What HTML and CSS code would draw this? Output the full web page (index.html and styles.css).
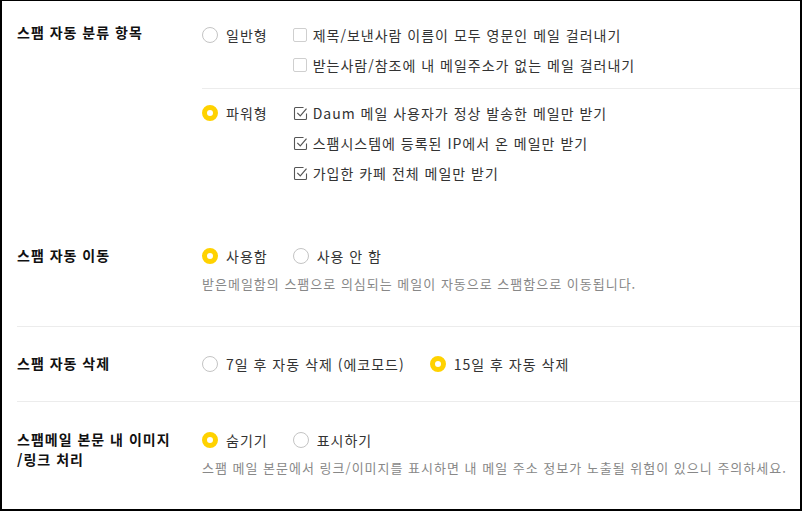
FILE: index.html
```html
<!DOCTYPE html>
<html lang="ko">
<head>
  <meta charset="UTF-8">
  <meta name="viewport" content="width=device-width, initial-scale=1.0">
  <title>스팸 설정</title>
  <link rel="stylesheet" href="styles.css">
</head>
<body>

<div class="frame">

  <div class="section">
    <div class="label label-top">스팸 자동 분류 항목</div>
    <div class="body">
      <div class="group">
        <span class="radio"><i class="dot"></i>일반형</span>
        <div class="checks">
          <div class="check"><i class="box"></i>제목/보낸사람 이름이 모두 영문인 메일 걸러내기</div>
          <div class="check"><i class="box"></i>받는사람/참조에 내 메일주소가 없는 메일 걸러내기</div>
        </div>
      </div>
      <div class="group group-line">
        <span class="radio"><i class="dot on"></i>파워형</span>
        <div class="checks">
          <div class="check">
            <svg class="tick" width="15" height="15" viewBox="0 0 15 15"><path d="M10.5 1.5H2.5a1 1 0 0 0-1 1v10a1 1 0 0 0 1 1h10a1 1 0 0 0 1-1V7.5" fill="none" stroke="#555" stroke-width="1.1"/><path d="M4.3 6.8l3 3.1 6.2-7.2" fill="none" stroke="#555" stroke-width="1.2"/></svg>Daum 메일 사용자가 정상 발송한 메일만 받기
          </div>
          <div class="check">
            <svg class="tick" width="15" height="15" viewBox="0 0 15 15"><path d="M10.5 1.5H2.5a1 1 0 0 0-1 1v10a1 1 0 0 0 1 1h10a1 1 0 0 0 1-1V7.5" fill="none" stroke="#555" stroke-width="1.1"/><path d="M4.3 6.8l3 3.1 6.2-7.2" fill="none" stroke="#555" stroke-width="1.2"/></svg>스팸시스템에 등록된 IP에서 온 메일만 받기
          </div>
          <div class="check">
            <svg class="tick" width="15" height="15" viewBox="0 0 15 15"><path d="M10.5 1.5H2.5a1 1 0 0 0-1 1v10a1 1 0 0 0 1 1h10a1 1 0 0 0 1-1V7.5" fill="none" stroke="#555" stroke-width="1.1"/><path d="M4.3 6.8l3 3.1 6.2-7.2" fill="none" stroke="#555" stroke-width="1.2"/></svg>가입한 카페 전체 메일만 받기
          </div>
        </div>
      </div>
    </div>
  </div>

  <div class="section sec-move">
    <div class="label">스팸 자동 이동</div>
    <div class="body">
      <div class="row">
        <span class="radio"><i class="dot on"></i>사용함</span>
        <span class="radio"><i class="dot"></i>사용 안 함</span>
      </div>
      <p class="desc">받은메일함의 스팸으로 의심되는 메일이 자동으로 스팸함으로 이동됩니다.</p>
    </div>
  </div>

  <div class="section sec-delete line">
    <div class="label">스팸 자동 삭제</div>
    <div class="body">
      <div class="row">
        <span class="radio"><i class="dot"></i>7일 후 자동 삭제 (에코모드)</span>
        <span class="radio"><i class="dot on"></i>15일 후 자동 삭제</span>
      </div>
    </div>
  </div>

  <div class="section sec-image line">
    <div class="label">스팸메일 본문 내 이미지<br>/링크 처리</div>
    <div class="body">
      <div class="row">
        <span class="radio"><i class="dot on"></i>숨기기</span>
        <span class="radio"><i class="dot"></i>표시하기</span>
      </div>
      <p class="desc">스팸 메일 본문에서 링크/이미지를 표시하면 내 메일 주소 정보가 노출될 위험이 있으니 주의하세요.</p>
    </div>
  </div>

</div>

</body>
</html>
```

FILE: styles.css
```css
* {
  box-sizing: border-box;
}
body {
  margin: 0;
  font-family: "Noto Sans CJK KR", "Noto Sans", sans-serif;
  font-size: 14px;
  letter-spacing: 1px;
  color: #333;
  background: #fff;
}
.frame {
  width: 802px;
  height: 511px;
  border: 2px solid #000;
  border-top-width: 1px;
  overflow: hidden;
}
.section {
  display: flex;
  margin-left: 15px;
}
.section:first-child {
  padding: 19px 0 30px;
}
.sec-move {
  padding: 23px 0 32px;
}
.sec-delete {
  padding: 22px 0 22px;
}
.sec-image {
  padding: 23px 0 0;
}
.line {
  border-top: 1px solid #ececec;
}
.label {
  width: 185px;
  flex-shrink: 0;
  padding-top: 4px;
  line-height: 20px;
  font-weight: bold;
  color: #111;
}
.label-top {
  padding-top: 2px;
}
.body {
  flex: 1;
}
.group {
  display: flex;
  gap: 25px;
}
.group-line {
  margin-top: 8px;
  padding-top: 9px;
  border-top: 1px solid #ececec;
}
.checks {
  display: flex;
  flex-direction: column;
}
.row {
  display: flex;
  gap: 25px;
}
.radio, .check {
  display: flex;
  align-items: center;
  height: 30px;
  white-space: nowrap;
}
.dot {
  width: 16px;
  height: 16px;
  margin-right: 8px;
  border: 1px solid #c4c4c4;
  border-radius: 50%;
  background: #fff;
}
.dot.on {
  border: 5px solid #ffd200;
}
.box {
  width: 14px;
  height: 14px;
  margin-right: 6px;
  border: 1px solid #cfcfcf;
  border-radius: 2px;
}
.tick {
  margin-right: 5px;
  flex-shrink: 0;
}
.desc {
  margin: 3px 0 0;
  line-height: 20px;
  font-size: 13px;
  color: #888;
  white-space: nowrap;
}
```
